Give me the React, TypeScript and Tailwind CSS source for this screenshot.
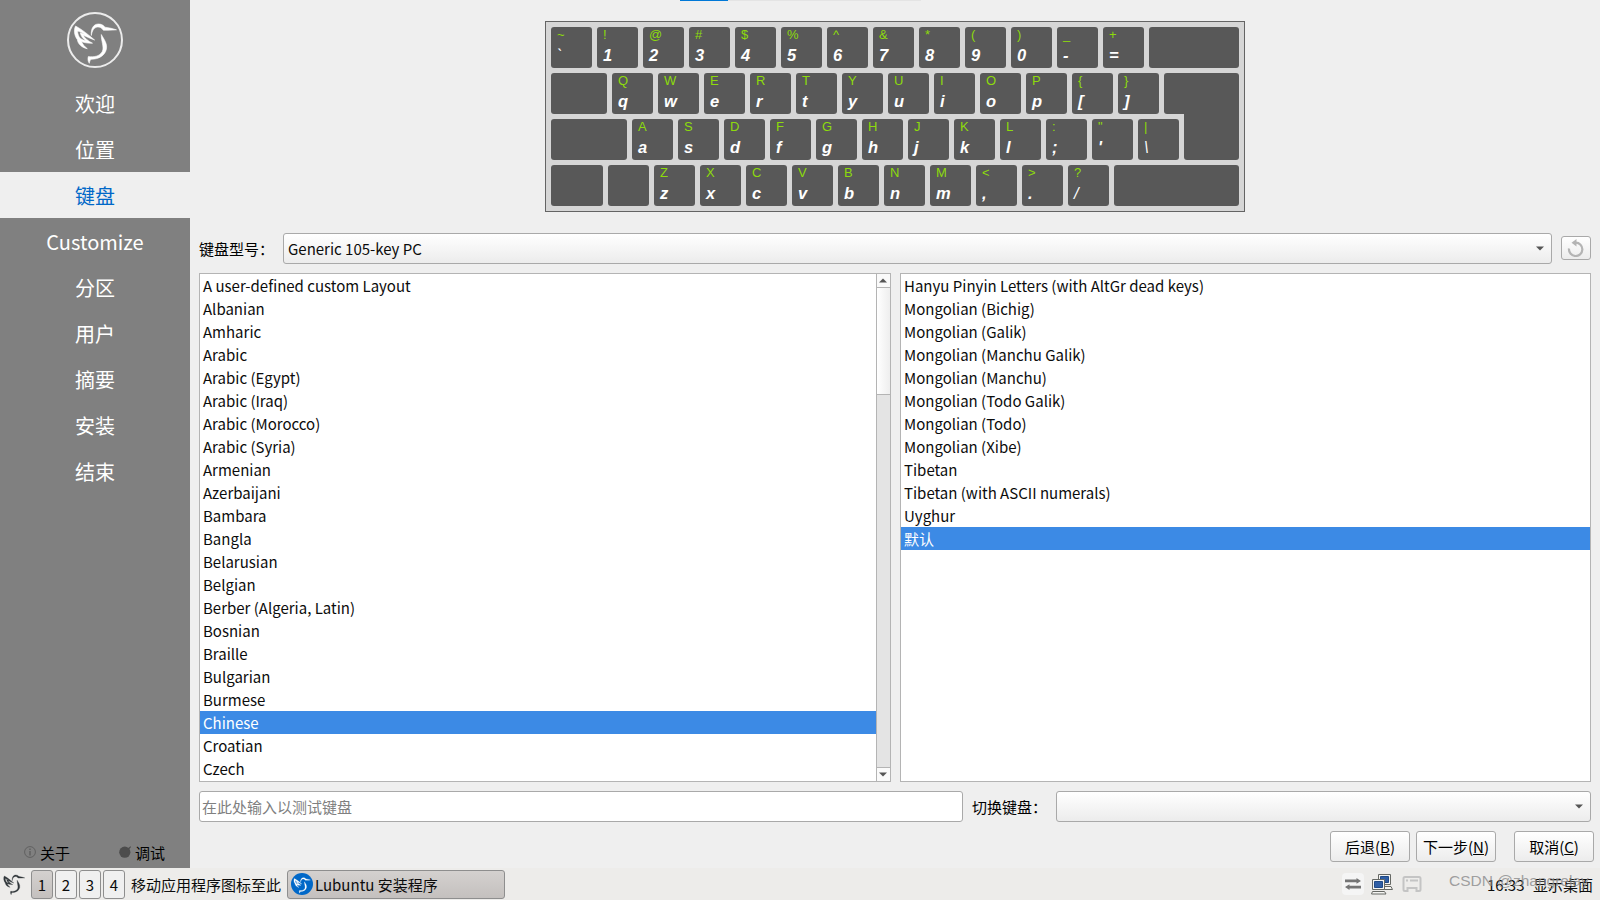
import React from 'react';

const steps = ['欢迎', '位置', '键盘', 'Customize', '分区', '用户', '摘要', '安装', '结束'];

const layouts = [
  'A user-defined custom Layout', 'Albanian', 'Amharic', 'Arabic', 'Arabic (Egypt)', 'Arabic (Iraq)',
  'Arabic (Morocco)', 'Arabic (Syria)', 'Armenian', 'Azerbaijani', 'Bambara', 'Bangla', 'Belarusian',
  'Belgian', 'Berber (Algeria, Latin)', 'Bosnian', 'Braille', 'Bulgarian', 'Burmese', 'Chinese',
  'Croatian', 'Czech',
];

const variants = [
  'Hanyu Pinyin Letters (with AltGr dead keys)', 'Mongolian (Bichig)', 'Mongolian (Galik)',
  'Mongolian (Manchu Galik)', 'Mongolian (Manchu)', 'Mongolian (Todo Galik)', 'Mongolian (Todo)',
  'Mongolian (Xibe)', 'Tibetan', 'Tibetan (with ASCII numerals)', 'Uyghur', '默认',
];

const rows = [
  { upper: '~!@#$%^&*()_+', lower: '`1234567890-=' },
  { upper: 'QWERTYUIOP{}', lower: 'qwertyuiop[]' },
  { upper: 'ASDFGHJKL:"|', lower: "asdfghjkl;'\\" },
  { upper: 'ZXCVBNM<>?', lower: 'zxcvbnm,./' },
];

const Bird: React.FC<{ className?: string }> = ({ className }) => (
  <svg viewBox="0 0 56 56" className={className} fill="currentColor" stroke="currentColor" strokeWidth="0.6">
    <path d="M24.3 23.5 C23.8 16.5 26.5 12 31.5 12 C35.2 12 36.6 13.8 38 15.2 C42 15.7 46 16.6 49.5 17.8 C44 18.4 39.5 18.2 36.3 18.2 C34.8 15.9 32.8 14.7 30.5 15 C27 15.5 25.2 18.5 24.3 23.5Z" />
    <path d="M34.3 22.5 C37 27.5 40.5 31.5 39.4 37 C38.2 43.5 31.5 47.5 24 47.2 C22.8 48.6 22.6 50 22.3 51.3 C21 49.5 20.6 47 21.3 44.6 C27 45.2 32.5 44.5 35.3 39.5 C37.5 35.2 34 29 34.3 22.5Z" />
    <path fillRule="evenodd" d="M8.6 14 C16 18 21.5 23 27.6 28 C24 26.8 20 25 16 23 C18 26.5 21 29 25.5 31.2 C21 31.4 17.5 30.8 14.5 29.6 C15.8 32.5 17.6 34.7 20.3 36.7 C14.5 35.5 11 32 10.3 27.5 C7.3 23.5 6.5 18 8.6 14Z M10.5 19 C10.8 22 11.5 24.5 13.5 26.5 C16 28 17.5 28.5 18.8 28.8 C15.8 26.8 14 24 13.2 20.8 C14.8 21.3 16.5 22 17.8 22.5 C15.5 20.8 13 19.6 10.5 19Z" />
  </svg>
);

const Arrow: React.FC<{ up?: boolean }> = ({ up }) => (
  <svg width="8" height="5" viewBox="0 0 8 5" fill="#555555">
    <path d={up ? 'M0 4.5 L4 0.5 L8 4.5Z' : 'M0 0.5 L8 0.5 L4 4.5Z'} />
  </svg>
);

const Key: React.FC<{ upper: string; lower: string }> = ({ upper, lower }) => (
  <div className="flex h-[41px] w-[41px] flex-col rounded-[3px] bg-[#585858] pl-[6px] text-white">
    <span className="h-[15px] text-[13px] leading-[16px] text-[#8ddb0c]">{upper}</span>
    <span className={`mt-[4px] text-[16.5px] leading-[18px] italic ${'/\\`'.includes(lower) ? 'font-normal' : 'font-bold'}`}>
      {lower}
    </span>
  </div>
);

const Keys: React.FC<{ row: number }> = ({ row }) => (
  <>
    {rows[row].upper.split('').map((upper, i) => (
      <Key key={upper} upper={upper} lower={rows[row].lower[i]} />
    ))}
  </>
);

const blank = 'h-[41px] rounded-[3px] bg-[#585858]';

const Keyboard: React.FC = () => (
  <div className="mx-auto flex h-[191px] w-[700px] flex-col gap-[5px] border border-[#646464] bg-[#d6d6d6] p-[5px] font-['Liberation_Sans',sans-serif]">
    <div className="flex gap-[5px]">
      <Keys row={0} />
      <div className={`${blank} flex-1`} />
    </div>
    <div className="flex gap-[5px]">
      <div className={`${blank} w-[56px]`} />
      <Keys row={1} />
      <div className={`${blank} flex-1 rounded-br-none`} />
    </div>
    <div className="flex gap-[5px]">
      <div className={`${blank} w-[76px]`} />
      <Keys row={2} />
      {/* lower half of the Enter key */}
      <div className="-mt-[5px] ml-auto h-[46px] w-[55px] rounded-b-[3px] bg-[#585858]" />
    </div>
    <div className="flex gap-[5px]">
      <div className={`${blank} w-[52px]`} />
      <div className={`${blank} w-[41px]`} />
      <Keys row={3} />
      <div className={`${blank} flex-1`} />
    </div>
  </div>
);

const List: React.FC<{ items: string[]; selected: string }> = ({ items, selected }) => (
  <ul className="flex-1 bg-white">
    {items.map((item) => (
      <li
        key={item}
        className={`h-[23px] pl-[3px] leading-[24px] ${item === selected ? 'bg-[#3c8ae5] text-white' : ''}`}
      >
        {item}
      </li>
    ))}
  </ul>
);

const control = 'rounded-[3px] border border-[#a9a9a9] bg-linear-to-b from-white to-[#ececec]';

const App: React.FC = () => {
  return (
    <div className="flex h-[900px] w-[1600px] flex-col overflow-hidden bg-[#efefef] font-['Noto_Sans_CJK_SC',sans-serif] text-[15px] whitespace-nowrap text-[#0c0c0c]">
      <div className="flex h-[868px]">
        {/* Sidebar */}
        <aside className="flex w-[190px] flex-col bg-[#808080]">
          <div className="flex h-[80px] justify-center pt-[12px]">
            <div className="h-[56px] w-[56px] rounded-full border-2 border-[#ececec] text-white">
              <Bird className="-mt-[2px] -ml-[2px] h-[56px] w-[56px]" />
            </div>
          </div>
          {steps.map((step) => (
            <div
              key={step}
              className={`h-[46px] text-center text-[20px] leading-[47px] ${step === '键盘' ? 'bg-[#efefef] text-[#0068c8]' : 'text-white'}`}
            >
              {step}
            </div>
          ))}
          <div className="mt-auto flex h-[30px] text-black">
            <div className="flex w-[94px] items-center justify-center gap-[4px]">
              <svg width="12" height="12" viewBox="0 0 12 12" fill="none" stroke="#606060" className="-mt-[3px]">
                <circle cx="6" cy="6" r="5.4" />
                <path d="M6 5v4.5M6 2.5v1.5" strokeWidth="1.5" />
              </svg>
              关于
            </div>
            <div className="flex w-[96px] items-center justify-center gap-[4px]">
              <svg width="12" height="12" viewBox="0 0 12 12" fill="#4c4c4c" className="-mt-[3px]">
                <circle cx="5.8" cy="6.2" r="5.6" />
                <path d="M8 3L11.5 0.3L12 1L9.5 4Z" />
              </svg>
              调试
            </div>
          </div>
        </aside>

        {/* Keyboard page */}
        <main className="flex flex-1 flex-col">
          <div className="h-px w-[731px] pl-[490px]">
            <div className="h-px bg-[#e4e4e4]">
              <div className="h-px w-[48px] bg-[#0078d7]" />
            </div>
          </div>
          <div className="mt-[20px]">
            <Keyboard />
          </div>

          <div className="mt-[21px] flex h-[31px] items-center pr-[9px] pl-[9px]">
            <span className="w-[84px] pt-[2px] text-black">键盘型号：</span>
            <div className={`${control} flex h-[31px] w-[1269px] items-center justify-between pr-[7px] pl-[4px]`}>
              <span className="pt-[2px]">Generic 105-key PC</span>
              <Arrow />
            </div>
            <div className={`${control} -mt-px ml-[9px] flex h-[24px] w-[30px] items-center justify-center`}>
              <svg width="18" height="18" viewBox="0 0 18 18" fill="none">
                <path d="M2 9.5A6.7 6.7 0 1 0 8.7 3.6" stroke="#b4b4b4" strokeWidth="2.2" />
                <path d="M9.5 0V7.5L4.5 3.7Z" fill="#b4b4b4" />
              </svg>
            </div>
          </div>

          <div className="mt-[9px] flex h-[509px] pl-[9px]">
            <div className="flex w-[692px] border border-[#b4b4b4]">
              <List items={layouts} selected="Chinese" />
              <div className="flex w-[14px] flex-col border-l border-[#b4b4b4] bg-[#e4e4e4]">
                <div className="flex h-[14px] items-center border-b border-[#b4b4b4] bg-[#fafafa] pl-[2px]">
                  <Arrow up />
                </div>
                <div className="h-[107px] border-b border-[#b4b4b4] bg-linear-to-r from-white to-[#eeeeee]" />
                <div className="mt-auto flex h-[14px] items-center border-t border-[#b4b4b4] bg-[#fafafa] pl-[2px]">
                  <Arrow />
                </div>
              </div>
            </div>
            <div className="ml-[9px] flex w-[691px] border border-[#b4b4b4]">
              <List items={variants} selected="默认" />
            </div>
          </div>

          <div className="mt-[9px] flex h-[31px] items-center pl-[9px]">
            <div className="flex h-[31px] w-[764px] items-center rounded-[3px] border border-[#a9a9a9] bg-white pt-[2px] pl-[2px] text-[#808080]">
              在此处输入以测试键盘
            </div>
            <span className="ml-[9px] w-[84px] pt-[2px] text-black">切换键盘：</span>
            <div className={`${control} flex h-[31px] w-[535px] items-center justify-end pr-[7px]`}>
              <Arrow />
            </div>
          </div>

          <div className="mt-[9px] flex h-[31px] justify-end pr-[6px] text-center leading-[30px] text-black">
            <div className={`${control} w-[80px]`}>后退(<u>B</u>)</div>
            <div className={`${control} ml-[6px] w-[80px]`}>下一步(<u>N</u>)</div>
            <div className={`${control} ml-[18px] w-[80px]`}>取消(<u>C</u>)</div>
          </div>
        </main>
      </div>

      {/* Taskbar */}
      <footer className="flex h-[32px] items-center bg-[#edecea]">
        <Bird className="-mt-[3px] h-[28px] w-[28px] text-[#30363a]" />
        <div className="ml-[3px] flex gap-[2px]">
          {['1', '2', '3', '4'].map((n) => (
            <div
              key={n}
              className={`h-[29px] w-[22px] rounded-[3px] border border-[#8e8e8e] text-center leading-[28px] ${n === '1' ? 'bg-linear-to-b from-[#d4d1cf] to-[#c4c0be]' : 'bg-[#f0f0f0]'}`}
            >
              {n}
            </div>
          ))}
        </div>
        <span className="ml-[6px] pt-[2px]">移动应用程序图标至此</span>
        <div className="ml-[6px] flex h-[29px] w-[218px] items-center rounded-[3px] border border-[#8e8e8e] bg-linear-to-b from-[#d4d1cf] to-[#c4c0be] pl-[3px]">
          <div className="mr-[2px] h-[22px] w-[22px] rounded-full bg-[#0068c8] text-white">
            <Bird className="h-[22px] w-[22px]" />
          </div>
          <span className="pt-[2px]">Lubuntu 安装程序</span>
        </div>
        <div className="ml-auto flex h-[32px] items-center">
          <div className="mr-[7px] flex h-[22px] w-[22px] items-center justify-center rounded-[4px] bg-[#f5f5f5]">
            <svg width="16" height="12" viewBox="0 0 16 12" fill="#757575">
              <path d="M0 1.6h11.5V0L16 2.9l-4.5 2.9V4.2H0Z" />
              <path d="M16 7.8H4.5V6.2L0 9.1l4.5 2.9V10.4H16Z" />
            </svg>
          </div>
          <svg width="22" height="22" viewBox="0 0 22 22" fill="#f4f4f2" stroke="#666864" className="-mt-px">
            <path d="M7.5 1.5h12v10h-12zM11 13.5h9l1.5 3h-9z" />
            <path d="M9.5 3.5h8v6h-8z" fill="#2f5ea5" stroke="#204a87" />
            <path d="M1.5 6.5h12v10h-12zM1.5 18.5h12l1.5 2.5H0.5z" />
            <path d="M3.5 8.5h8v6h-8z" fill="#2f5ea5" stroke="#204a87" />
          </svg>
          <svg className="ml-[9px]" width="20" height="18" viewBox="0 0 20 18" fill="none" stroke="#c4c4c4" strokeWidth="2">
            <path d="M1.5 3.5Q1.5 2 3 2H17Q18.5 2 18.5 3.5V14.5Q18.5 16 17 16H14.5V13H5.5V16H3Q1.5 16 1.5 14.5Z" />
            <path d="M4 5.5H6M8 5.5H16" />
          </svg>
          <div className="relative mr-[7px] ml-[65px] flex h-[32px] items-center pt-[2px]">
            <span className="w-[46px]">16:33</span>
            <span>显示桌面</span>
            <span className="absolute top-[2px] -left-[38px] font-['Liberation_Sans',sans-serif] text-[15.5px] leading-[22px] text-[#8a8a8a]/80">
              CSDN @zhangrelay
            </span>
          </div>
        </div>
      </footer>
    </div>
  );
};

export default App;
